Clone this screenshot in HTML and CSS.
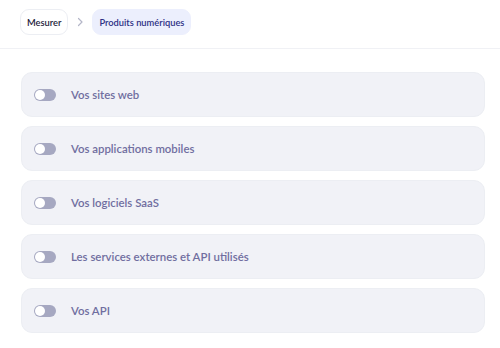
FILE: index.html
```html
<!DOCTYPE html>
<html lang="fr">
<head>
  <meta charset="UTF-8">
  <title>Produits numériques</title>
  <link rel="stylesheet" href="styles.css">
</head>
<body>
<div class="topbar">
  <nav class="crumbs">
    <a class="crumb">Mesurer</a>
    <svg class="sep" width="8" height="10" viewBox="0 0 8 10"><path d="M2.5 1.5 6 5 2.5 8.5" fill="none" stroke="#b4b6c8" stroke-width="1.2" stroke-linecap="round" stroke-linejoin="round"/></svg>
    <a class="crumb current">Produits numériques</a>
  </nav>
</div>

<div class="list">
  <label class="row"><span class="switch"><span class="knob"></span></span><span class="label">Vos sites web</span></label>
  <label class="row"><span class="switch"><span class="knob"></span></span><span class="label">Vos applications mobiles</span></label>
  <label class="row"><span class="switch"><span class="knob"></span></span><span class="label">Vos logiciels SaaS</span></label>
  <label class="row"><span class="switch"><span class="knob"></span></span><span class="label">Les services externes et API utilisés</span></label>
  <label class="row"><span class="switch"><span class="knob"></span></span><span class="label">Vos API</span></label>
</div>
</body>
</html>
```

FILE: styles.css
```css
* { box-sizing: border-box; }
body {
  margin: 0;
  background: #fff;
  font-family: Lato, "Noto Sans", sans-serif;
}

.topbar {
  height: 49px;
  padding: 9px 20px 0;
  border-bottom: 1px solid #f0f1f5;
}

.crumbs {
  display: flex;
  align-items: center;
  gap: 8px;
}

.crumb {
  display: inline-flex;
  align-items: center;
  height: 26px;
  padding: 0 6px;
  border: 1px solid #eceef3;
  border-radius: 9px;
  font-size: 9.3px;
  font-weight: 600;
  color: #1c1c3a;
}

.crumb.current {
  background: #eceffd;
  border-color: #eceffd;
  color: #2d2f85;
}

.list {
  display: flex;
  flex-direction: column;
  gap: 9px;
  padding: 23px 15px 0 21px;
}

.row {
  display: flex;
  align-items: center;
  gap: 15px;
  height: 45px;
  padding: 0 12px;
  background: #f1f2f7;
  border: 1px solid #eceef3;
  border-radius: 11px;
  cursor: pointer;
}

.switch {
  position: relative;
  width: 22px;
  height: 12px;
  border-radius: 6px;
  background: #a6a8c1;
  flex: none;
}

.knob {
  position: absolute;
  top: 1px;
  left: 1px;
  width: 10px;
  height: 10px;
  border-radius: 50%;
  background: #fff;
}

.label {
  font-size: 11.4px;
  font-weight: 600;
  color: #706ea0;
}
```
